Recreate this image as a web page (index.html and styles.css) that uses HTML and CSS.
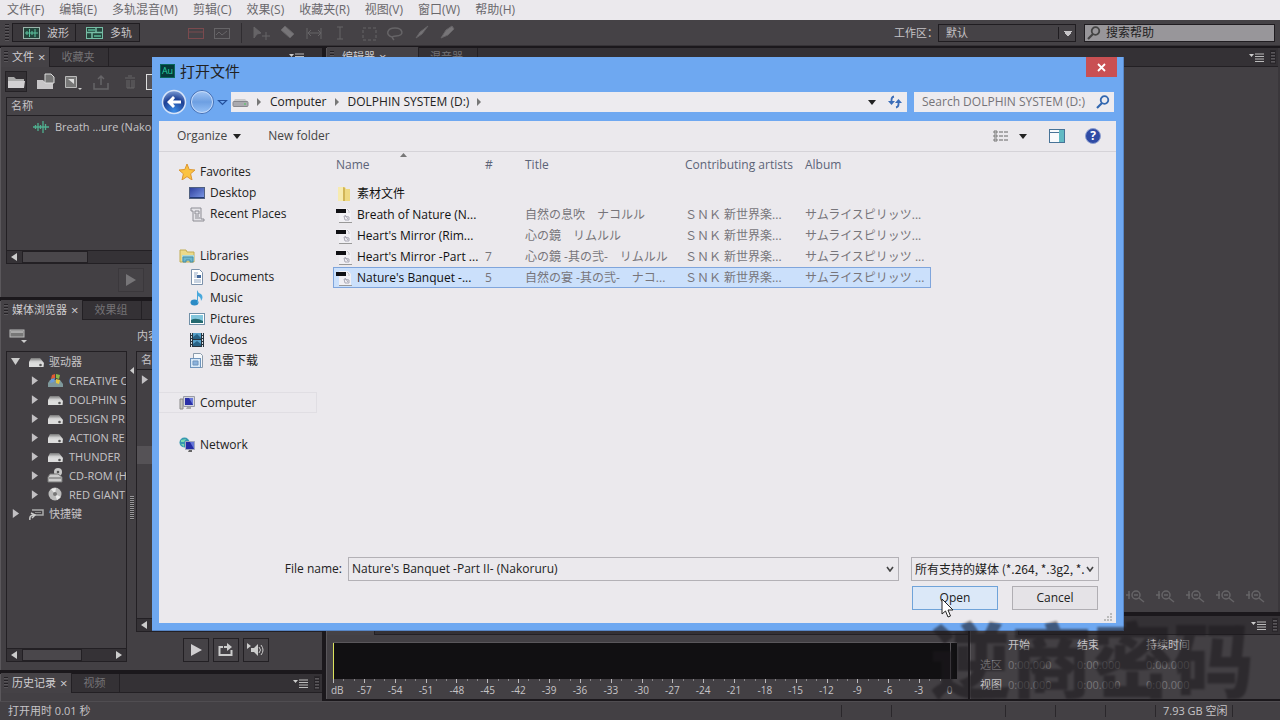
FILE: index.html
```html
<!DOCTYPE html>
<html lang="zh-CN">
<head>
<meta charset="utf-8">
<title>打开文件</title>
<link rel="stylesheet" href="styles.css">
</head>
<body>
<svg class="defs" aria-hidden="true">
  <linearGradient id="steel" x1="0" y1="0" x2="0" y2="1"><stop offset="0" stop-color="#777"/><stop offset=".45" stop-color="#ddd"/><stop offset="1" stop-color="#999"/></linearGradient>
  <linearGradient id="screen" x1="0" y1="0" x2="1" y2="1"><stop offset="0" stop-color="#2c3d9c"/><stop offset="1" stop-color="#7f9ce8"/></linearGradient>
  <symbol id="drive" viewBox="0 0 16 12"><path d="M3 2h9l4 5v4H1V6z" fill="url(#steel)"/><path d="M1 7h14v4H1z" fill="#ddd"/><circle cx="12.500" cy="9" r="1.300" fill="#555"/></symbol>
  <symbol id="tri" viewBox="0 0 8 10"><path d="M1 0l7 5-7 5z" fill="#c2c0c3"/></symbol>
  <symbol id="pmenu" viewBox="0 0 15 9"><path d="M0 1h5L2.500 4z" fill="#ccc"/><path d="M6 1h9M6 3.500h9M6 6h9M6 8.500h9" stroke="#bbb"/></symbol>
  <symbol id="wave" viewBox="0 0 16 12"><path d="M0 6h16M2.500 4v4M5 2v8M7.500 4v4M10 0v12M12.500 3v6" stroke="#4fb090" fill="none" stroke-width="1.300"/></symbol>
  <symbol id="audio" viewBox="0 0 16 16"><path d="M3 1h9l3 3v11H3z" fill="#f1f0f4"/><path d="M0 2h10v4H0z" fill="#101014"/><path d="M11 2l2 2v2" stroke="#c4c3ca" fill="none"/><path d="M8 9l5 1v3H9zM9 8l3 4" stroke="#aaa9b5" fill="none"/><path d="M3 15.500h13" stroke="#999"/></symbol>
  <symbol id="lens" viewBox="0 0 14 14"><circle cx="8.500" cy="5" r="3.800" fill="none" stroke="currentColor" stroke-width="1.800"/><path d="M6 8l-5 5" stroke="currentColor" stroke-width="2.200"/></symbol>
  <symbol id="zoomer" viewBox="0 0 22 16"><circle cx="11" cy="7" r="4" fill="none" stroke="#666467" stroke-width="1.500"/><path d="M14 10l5 4M4 3v8M1 7h4M9 7h4" stroke="#666467" stroke-width="1.500"/></symbol>
</svg>

<nav class="menubar">
  <button>文件(F)</button><button>编辑(E)</button><button>多轨混音(M)</button><button>剪辑(C)</button><button>效果(S)</button><button>收藏夹(R)</button><button>视图(V)</button><button>窗口(W)</button><button>帮助(H)</button>
</nav>

<header class="toolbar">
  <span class="grip"></span>
  <button class="mode"><svg width="17" height="12"><rect x=".5" y=".5" width="16" height="11" fill="#24463c" stroke="#9ab5ab"/><path d="M2 6h13M4 4v4M6.500 2v8M9 4v4M12 2v8" stroke="#5cc4a0"/></svg>波形</button>
  <button class="mode"><svg width="17" height="12"><rect x=".5" y=".5" width="16" height="11" fill="#24463c" stroke="#76bda5"/><path d="M1 5.500h15M10 1v4M6 6v5" stroke="#76bda5" stroke-width="1.500"/><path d="M2 2h7v2H2zM8 8h7v2H8z" fill="#4c9b80"/></svg>多轨</button>
  <svg class="tools" width="290" height="24" fill="none" stroke="#666467">
    <rect x="48.500" y="7.500" width="15" height="10" stroke="#7b4a4e"/><path d="M48 11h16" stroke="#7b4a4e"/><rect x="74.500" y="7.500" width="15" height="10"/><path d="M76 14l3-3 3 3 5-4"/>
    <path d="M101.500 2v20" stroke="#302d31"/><path d="M114 6l7 6-4 1-3 4z" fill="#666467"/><path d="M122 15h8M126 11v8"/><path d="M141 9l4-4 9 8-4 4z" fill="#777578"/><path d="M167 7v11M181 7v11M168 12h12M171 9l-3 3 3 3M178 9l3 3-3 3"/><path d="M197 6h6M200 6v12M197 18h6"/><rect x="223" y="7" width="13" height="12" stroke-dasharray="3 2"/><path d="M252 16c-7-2-5-9 3-9s10 8 1 8c-5 0-4 2-2 4" stroke-width="1.500"/><path d="M276 17l6-4 6-8-8 6z" fill="#777578"/><path d="M301 17l5-8 6-4 2 3-6 6z" fill="#777578"/>
  </svg>
  <div class="workspace-pick"><label for="ws">工作区：</label><select id="ws" class="dark-select"><option>默认</option></select></div>
  <label class="help-search"><svg width="14" height="14" color="#444"><use href="#lens"/></svg><input type="text" value="搜索帮助" aria-label="搜索帮助"></label>
</header>

<main class="work">
  <div class="left">
    <section class="panel files">
      <div class="tabs"><button class="tab on"><i class="grip"></i>文件<b>×</b></button><button class="tab wide">收藏夹</button><svg class="pm far" width="15" height="9"><use href="#pmenu"/></svg></div>
      <div class="file-tools">
        <svg width="136" height="24"><rect x=".5" y="1.500" width="21" height="20" fill="#343135" stroke="#252226"/><path d="M3 7h6l2 2h8v9H3z" fill="#aaa"/><path d="M3 11h17l-1 7H3z" fill="#d2d0d2"/><path d="M32 10h6l2 2h8v7H32z" fill="#c8c6c8"/><path d="M40 4h6l3 3v6h-9z" fill="#777" stroke="#ddd"/><path d="M60.500 6.500h11v11h-11z" fill="#777" stroke="#bbb"/><path d="M63 9h6v5z" fill="#ddd"/><path d="M73 18h4l-2 2z" fill="#ccc"/><path d="M89 13v6h14v-6M96 15V6M93 9l3-3 3 3" stroke="#666467" fill="none" stroke-width="1.500"/><path d="M120 8h10M122 10v8h7v-8M124 10v8M127 10v8M123 6h4" stroke="#666467" fill="none"/></svg>
        <input type="text" aria-label="筛选" class="filter">
      </div>
      <div class="file-box">
        <div class="col-head">名称</div>
        <div class="clip"><svg width="16" height="12"><use href="#wave"/></svg>Breath ...ure (Nakoru</div>
        <div class="hscroll"><svg width="6" height="8"><path d="M6 0v8L0 4z" fill="#ccc"/></svg><span class="thumb"></span></div>
      </div>
      <div class="play-row"><button class="sq dim" aria-label="播放"><svg width="10" height="12"><path d="M0 0l10 6-10 6z" fill="#777578"/></svg></button></div>
    </section>

    <section class="panel media">
      <div class="tabs"><button class="tab on"><i class="grip"></i>媒体浏览器<b>×</b></button><button class="tab wide">效果组</button></div>
      <div class="media-bar"><svg width="18" height="14"><rect x="1" y="1" width="14" height="7" fill="#777" stroke="#bbb"/><path d="M2 3h12" stroke="#ddd"/><path d="M12 11h6l-3 3z" fill="#ccc"/></svg><span>内容</span></div>
      <div class="media-main">
        <div class="tree">
          <ul>
            <li class="root"><svg width="9" height="7"><path d="M0 0h9L4.500 7z" fill="#ccc"/></svg><svg width="16" height="12"><use href="#drive"/></svg><span>驱动器</span></li>
            <li><svg width="7" height="9"><use href="#tri"/></svg><svg width="16" height="15"><path d="M3 7h10l3 4v3H1v-4z" fill="#7e989b"/><path d="M5 2l3-1v4l-4 1z" fill="#e45b32"/><path d="M9 1l4 1-1 4-3-1z" fill="#8ab848"/><path d="M4 6l4-1-1 4-4 1z" fill="#6a9bd8"/><path d="M9 6l4 1-1 4-3-1z" fill="#e9c83d"/></svg><span>CREATIVE C</span></li>
            <li><svg width="7" height="9"><use href="#tri"/></svg><svg width="16" height="12"><use href="#drive"/></svg><span>DOLPHIN S</span></li>
            <li><svg width="7" height="9"><use href="#tri"/></svg><svg width="16" height="12"><use href="#drive"/></svg><span>DESIGN PR</span></li>
            <li><svg width="7" height="9"><use href="#tri"/></svg><svg width="16" height="12"><use href="#drive"/></svg><span>ACTION RE</span></li>
            <li><svg width="7" height="9"><use href="#tri"/></svg><svg width="16" height="12"><use href="#drive"/></svg><span>THUNDER</span></li>
            <li><svg width="7" height="9"><use href="#tri"/></svg><svg width="16" height="15"><circle cx="11" cy="4" r="4" fill="#c9c9c9"/><circle cx="11" cy="4" r="1.300" fill="#555"/><path d="M1 9l2-3h8l4 3v5H1z" fill="#ccc" stroke="#777"/><path d="M2 10h12" stroke="#666"/></svg><span>CD-ROM (H</span></li>
            <li><svg width="7" height="9"><use href="#tri"/></svg><svg width="16" height="15"><circle cx="8" cy="7" r="6.500" fill="#bbb"/><path d="M8 7L4 2l5-1zM8 7l6 3-4 3z" fill="#e8e8e8"/><circle cx="8" cy="7" r="2" fill="#777"/></svg><span>RED GIANT</span></li>
            <li class="root"><svg width="9" height="9"><use href="#tri"/></svg><svg width="16" height="12"><path d="M4 2h11v5H6" fill="none" stroke="#aaa" stroke-width="1.500"/><path d="M7 4.500h6" stroke="#888"/><path d="M2 12q-1-5 4-5M3 5l4 2-3 3" fill="none" stroke="#ccc" stroke-width="1.500"/></svg><span>快捷键</span></li>
          </ul>
          <div class="hscroll"><svg width="6" height="8"><path d="M6 0v8L0 4z" fill="#ccc"/></svg><span class="thumb"></span><svg class="end" width="6" height="8"><path d="M0 0v8l6-4z" fill="#ccc"/></svg></div>
        </div>
        <div class="splitter"><svg width="4" height="7"><path d="M4 0v7L0 3.500z" fill="#ccc"/></svg><i></i></div>
        <div class="media-right">
          <div class="media-list"><div class="col-head">名</div><svg class="mt" width="7" height="9"><use href="#tri"/></svg><div class="band"></div><div class="hscroll"><svg width="6" height="8"><path d="M6 0v8L0 4z" fill="#ccc"/></svg></div></div>
          <div class="transport">
            <button class="sq" aria-label="播放"><svg width="11" height="12"><path d="M0 0l11 6-11 6z" fill="#d0ced0"/></svg></button>
            <button class="sq" aria-label="循环"><svg width="16" height="14"><path d="M5 4H1.500v8h12V7M6 4h6" fill="none" stroke="#ccc" stroke-width="2"/><path d="M9 0l5 4-5 4z" fill="#ccc"/></svg></button>
            <button class="sq" aria-label="自动播放"><svg width="18" height="14"><path d="M0 0l4 3-4 3zM4 5h3l4-4v12L7 9H4z" fill="#ccc"/><path d="M12 4q3 3 0 6M14 2q4 5 0 10" fill="none" stroke="#ccc"/></svg></button>
          </div>
        </div>
      </div>
    </section>

    <section class="panel history">
      <div class="tabs"><button class="tab on"><i class="grip"></i>历史记录<b>×</b></button><button class="tab wide">视频</button><svg class="pm" width="15" height="9"><use href="#pmenu"/></svg><i class="edge grip"></i></div>
    </section>
  </div>

  <div class="right">
    <section class="panel editor">
      <div class="tabs"><button class="tab on ed"><i class="grip"></i>编辑器<b>×</b></button><button class="tab wide">混音器</button><svg class="pm" width="15" height="9"><use href="#pmenu"/></svg><i class="edge grip"></i></div>
      <div class="zooms"><svg width="22" height="16"><use href="#zoomer"/></svg><svg width="22" height="16"><use href="#zoomer"/></svg><svg width="22" height="16"><use href="#zoomer"/></svg><svg width="22" height="16"><use href="#zoomer"/></svg><svg width="22" height="16"><use href="#zoomer"/></svg></div>
    </section>
    <div class="bottom">
      <section class="panel levels">
        <div class="tabs"><div class="tab on lvl"></div></div>
        <div class="meter"></div>
        <div class="ticks"></div>
        <div class="scale"><span class="db">dB</span><ol><li>-57</li><li>-54</li><li>-51</li><li>-48</li><li>-45</li><li>-42</li><li>-39</li><li>-36</li><li>-33</li><li>-30</li><li>-27</li><li>-24</li><li>-21</li><li>-18</li><li>-15</li><li>-12</li><li>-9</li><li>-6</li><li>-3</li><li>0</li></ol></div>
      </section>
      <section class="panel range">
        <div class="tabs"><div class="tab on lvl"></div><svg class="pm" width="15" height="9"><use href="#pmenu"/></svg><i class="edge grip"></i></div>
        <table><thead><tr><th></th><th>开始</th><th>结束</th><th>持续时间</th></tr></thead><tbody><tr><th>选区</th><td>0:00.000</td><td>0:00.000</td><td>0:00.000</td></tr><tr><th>视图</th><td>0:00.000</td><td>0:00.000</td><td>0:00.000</td></tr></tbody></table>
      </section>
    </div>
  </div>
</main>

<footer class="status"><span class="msg">打开用时 0.01 秒</span><span class="s1"></span><span class="s2"></span><span class="s1"></span><span class="s1"></span><span class="s1"></span><span class="free">7.93 GB 空闲</span><span class="s3"></span></footer>

<div class="dialog" role="dialog" aria-labelledby="dt">
  <div class="title"><span class="au">Au</span><h1 id="dt">打开文件</h1><button class="close" aria-label="Close"><svg width="9" height="9"><path d="M1 1l7 7M8 1L1 8" stroke="#fff" stroke-width="1.800"/></svg></button></div>
  <div class="navrow">
    <svg class="backfwd" width="68" height="26">
      <defs><radialGradient id="bk" cx=".5" cy=".9" r=".9"><stop offset="0" stop-color="#3d8ee8"/><stop offset=".6" stop-color="#1d3f94"/><stop offset="1" stop-color="#7f9fd8"/></radialGradient><linearGradient id="fw" x1="0" y1="0" x2="0" y2="1"><stop offset="0" stop-color="#a6c8f5"/><stop offset=".5" stop-color="#6d9fe2"/><stop offset="1" stop-color="#98c3f8"/></linearGradient></defs>
      <circle cx="13" cy="13" r="11.500" fill="url(#bk)" stroke="#d5e3f8" stroke-width="1.500"/><path d="M6 13l6-6 2 2-2 2.500h8v3h-8l2 2.500-2 2z" fill="#fff"/><circle cx="41" cy="13" r="11.500" fill="url(#fw)" stroke="#456fb3"/><circle cx="41" cy="13" r="10.500" fill="none" stroke="#c4dafa"/><path d="M57.500 11.500h8l-4 4z" fill="none" stroke="#24509c" stroke-width="1.200"/>
    </svg>
    <div class="address"><svg width="17" height="12"><path d="M3 3h10l3 3H1z" fill="#c9c9cc"/><rect x="1" y="5.500" width="15" height="5" rx="1" fill="#aaaab0" stroke="#88888e"/><path d="M12 8h2" stroke="#4c5"/></svg><i class="arr"></i><button>Computer</button><i class="arr"></i><button>DOLPHIN SYSTEM (D:)</button><i class="arr"></i><i class="down"></i><button class="refresh" aria-label="Refresh"><svg width="14" height="14"><path d="M6 1.500Q3.500 2 3.500 5v3M8 12.500q2.500-.5 2.500-3.500V6" fill="none" stroke="#3a6cb8" stroke-width="1.800"/><path d="M0 6h7L3.500 10zM7 8h7l-3.500-4z" fill="#3a6cb8"/></svg></button></div>
    <label class="search"><input type="text" placeholder="Search DOLPHIN SYSTEM (D:)" aria-label="Search"><svg width="14" height="14" color="#3267b0"><use href="#lens"/></svg></label>
  </div>
  <div class="client">
    <div class="cmdbar"><button>Organize <i class="down"></i></button><button>New folder</button>
      <button class="view" aria-label="View"><svg width="16" height="12"><path d="M1 1h3v2H1zM1 5h3v2H1zM1 9h3v2H1z" fill="#ddd" stroke="#777"/><path d="M6 2h4M11 2h4M6 6h4M11 6h4M6 10h4M11 10h4" stroke="#666"/></svg><i class="down"></i></button>
      <button class="pane" aria-label="Preview pane"><svg width="16" height="14"><rect x=".5" y=".5" width="15" height="13" fill="#f8fafc" stroke="#477397"/><path d="M1 3.500h9" stroke="#477397"/><path d="M10 1h5v12h-5z" fill="#62bac4"/></svg></button>
      <button class="help" aria-label="Help">?</button></div>
    <div class="browse">
      <ul class="places">
        <li><svg width="16" height="16"><path d="M8 0l2.200 5.500 5.800.5-4.400 3.800L13 16l-5-3.400L3 16l1.400-6.200L0 6l5.800-.5z" fill="#fbc340" stroke="#dc9530"/></svg><a href="#">Favorites</a></li>
        <li class="sub"><svg width="16" height="16"><rect x=".5" y="2.500" width="15" height="11" fill="url(#screen)" stroke="#506080"/><path d="M1 12.500h14" stroke="#233a77"/></svg><a href="#">Desktop</a></li>
        <li class="sub"><svg width="16" height="16"><path d="M2 2h10v11h3v2H4V5H2z" fill="#e5e4e8" stroke="#8d8d94"/><path d="M6 5h4v3H6zM6 10h4M6 12h5" fill="none" stroke="#8d8d94"/></svg><a href="#">Recent Places</a></li>
        <li class="gap"><svg width="16" height="16"><path d="M1 2h6l1 2h7v10H1z" fill="#ead98a" stroke="#c1ac55"/><path d="M3 7h12v6H3z" fill="#a9d8dd"/><path d="M4 14V9h10v5h-3v-2H7v2z" fill="#6db7cd" stroke="#478da5"/></svg><a href="#">Libraries</a></li>
        <li class="sub"><svg width="16" height="16"><path d="M2.500.5h8l3 3v12h-11z" fill="#fff" stroke="#7b91ab"/><path d="M5 4h4M5 6h3M5 8h3M5 11h7M5 13h7" stroke="#91a7c4"/><path d="M8 6h4v3H8z" fill="#43699c"/></svg><a href="#">Documents</a></li>
        <li class="sub"><svg width="16" height="16"><ellipse cx="5.500" cy="12.500" rx="4" ry="3" fill="#2b8bc5"/><path d="M8 13V0q1 3 4 4 3 3 0 7 0-4-3-5v7z" fill="#48a8dc"/></svg><a href="#">Music</a></li>
        <li class="sub"><svg width="16" height="16"><rect x=".5" y="2.500" width="15" height="11" fill="#fff" stroke="#7090a8"/><path d="M2 4h12v8H2z" fill="#82c6dc"/><path d="M2 9q5-3 12 1v2H2z" fill="#246a70"/></svg><a href="#">Pictures</a></li>
        <li class="sub"><svg width="16" height="16"><path d="M1 1h14v14H1z" fill="#27343e"/><path d="M4 1h8v6H4zM4 8h8v6H4z" fill="#57a0c8"/><path d="M4 5l4-3 4 4v1H4zM4 12l4-3 4 3v2H4z" fill="#286386"/><path d="M2.500 1v14M13.500 1v14" stroke="#dce2e6" stroke-dasharray="2 1"/></svg><a href="#">Videos</a></li>
        <li class="sub"><svg width="16" height="16"><path d="M4.500.5h7l2 2v12h-9z" fill="#f5f8fb" stroke="#8b9bab"/><rect x="1.500" y="5.500" width="10" height="9" fill="#d7e8f7" stroke="#6e94bd"/><path d="M4 8h5v4H4z" fill="#8bb2dc" stroke="#6e94bd"/></svg><a href="#">迅雷下载</a></li>
        <li class="gap hot"><svg width="16" height="16"><path d="M1 4h3v10H1z" fill="#c8c8bf" stroke="#888"/><path d="M4.500 1.500h11v10h-11z" fill="#d3d5df" stroke="#999ba5"/><path d="M6 3h8v7H6z" fill="#292fa6"/><path d="M10 3h4v7z" fill="#6877db"/><path d="M8 12h4v2H7z" fill="#aaa"/></svg><a href="#">Computer</a></li>
        <li class="gap"><svg width="16" height="16"><circle cx="5.500" cy="5.500" r="5" fill="#3799b0"/><path d="M2 3l5-1-2 3H2zM2 7h3v3z" fill="#7cdab0"/><path d="M6.500 4.500h9v8h-9z" fill="#252ca4" stroke="#a4a9bd"/><path d="M11 5h4v7z" fill="#6576d8"/><path d="M10 13h3v2h-4z" fill="#666"/></svg><a href="#">Network</a></li>
      </ul>
      <div class="listing">
        <table class="list">
          <colgroup><col class="c1"><col class="c2"><col class="c3"><col class="c4"><col class="c5"></colgroup>
          <thead><tr><th><svg class="sort" width="7" height="4"><path d="M0 4l3.500-4L7 4z" fill="#777"/></svg>Name</th><th>#</th><th>Title</th><th>Contributing artists</th><th>Album</th></tr></thead>
          <tbody>
            <tr><td><div><svg width="16" height="16"><path d="M2 1h7l1 2h4v12H2z" fill="#eed982"/><path d="M2 1h5v14H2z" fill="#f7ebb0"/><path d="M7 1l2 1v13H7z" fill="#d1b557"/></svg>素材文件</div></td><td></td><td></td><td></td><td></td></tr>
            <tr><td><div><svg width="16" height="16"><use href="#audio"/></svg>Breath of Nature (N...</div></td><td></td><td lang="ja">自然の息吹　ナコルル</td><td lang="ja">ＳＮＫ 新世界楽...</td><td lang="ja">サムライスピリッツ...</td></tr>
            <tr><td><div><svg width="16" height="16"><use href="#audio"/></svg>Heart's Mirror (Rim...</div></td><td></td><td lang="ja">心の鏡　リムルル</td><td lang="ja">ＳＮＫ 新世界楽...</td><td lang="ja">サムライスピリッツ...</td></tr>
            <tr><td><div><svg width="16" height="16"><use href="#audio"/></svg>Heart's Mirror -Part ...</div></td><td>7</td><td lang="ja">心の鏡 -其の弐-　リムルル</td><td lang="ja">ＳＮＫ 新世界楽...</td><td lang="ja">サムライスピリッツ ...</td></tr>
            <tr class="sel"><td><div><svg width="16" height="16"><use href="#audio"/></svg>Nature's Banquet -...</div></td><td>5</td><td lang="ja">自然の宴 -其の弐-　ナコ...</td><td lang="ja">ＳＮＫ 新世界楽...</td><td lang="ja">サムライスピリッツ ...</td></tr>
          </tbody>
        </table>
      </div>
    </div>
    <div class="choose">
      <div class="line"><label for="fn">File name:</label><div class="combo"><input id="fn" type="text" value="Nature's Banquet -Part II- (Nakoruru)"><svg width="8" height="6"><path d="M1 1l3 4 3-4" fill="none" stroke="#444" stroke-width="1.600"/></svg></div><div class="combo type"><select aria-label="文件类型"><option>所有支持的媒体 (*.264, *.3g2, *.</option></select><svg width="8" height="6"><path d="M1 1l3 4 3-4" fill="none" stroke="#444" stroke-width="1.600"/></svg></div></div>
      <div class="line acts"><button class="push primary">Open</button><button class="push">Cancel</button></div>
    </div>
    <svg class="size" width="9" height="9" fill="#bbb"><path d="M6 0h2v2H6zM3 3h2v2H3zM6 3h2v2H6zM0 6h2v2H0zM3 6h2v2H3zM6 6h2v2H6z"/></svg>
  </div>
</div>

<div class="watermark">逆商密码</div>
<svg class="pointer" width="14" height="20"><path d="M1 1v15l3.500-3 2.500 6 2.500-1L7 12h5z" fill="#fff" stroke="#222"/></svg>
</body>
</html>
```
FILE: styles.css
```css
* { box-sizing: border-box; }
body {
  margin: 0;
  height: 100vh;
  display: flex;
  flex-direction: column;
  overflow: hidden;
  position: relative;
  background: #1b181c;
  color: #c6c4c7;
  font: 11px/16px "Open Sans", "Noto Sans CJK SC", sans-serif;
}
button, input, select { font: inherit; color: inherit; border: 0; background: none; padding: 0; margin: 0; border-radius: 0; }
input, select { min-width: 0; outline: 0; appearance: none; }
ul, ol { list-style: none; margin: 0; padding: 0; }
svg { flex: none; display: block; }
a { color: inherit; text-decoration: none; }
.defs { position: absolute; width: 0; height: 0; }

.menubar { display: flex; gap: 15px; height: 20px; padding: 0 7px; background: #ebe9ed; color: #6a686c; font-size: 12px; flex: none; }
.menubar button { white-space: nowrap; }

.toolbar { display: flex; align-items: center; height: 26px; flex: none; background: #454246; padding: 0 5px; border-bottom: 1px solid #353236; }
.grip { flex: none; width: 4px; height: 12px; background: repeating-linear-gradient(#242125 0 1px, #5a575b 1px 2px, #454246 2px 3px); }
.toolbar > .grip { margin-right: 3px; height: 18px; }
.mode { display: flex; align-items: center; gap: 7px; width: 64px; height: 19px; padding-left: 10px; border: 1px solid #201d21; background: #3b383c; }
.mode + .mode { border-left: 0; }
.tools { width: 330px; }
.workspace-pick { display: flex; align-items: center; margin-left: auto; }
.dark-select { width: 138px; height: 18px; padding-left: 7px; border: 1px solid #201d21; background: conic-gradient(from -37deg at 50% 100%, #c6c4c7 74deg, transparent 0) 125px 6px / 8px 6px no-repeat, linear-gradient(#201d21, #201d21) 119px 2px / 1px 12px no-repeat, #454246; }
.help-search { display: flex; align-items: center; gap: 5px; width: 191px; height: 18px; margin-left: 8px; padding-left: 2px; border: 1px solid #201d21; background: #98969a; color: #222; font-size: 12px; }
.help-search input { width: 100%; }

.work { flex: 1; min-height: 0; display: flex; gap: 4px; padding-top: 2px; }
.left { width: 322px; flex: none; display: flex; flex-direction: column; gap: 4px; }
.right { flex: 1; min-width: 0; display: flex; flex-direction: column; gap: 4px; }
.panel { background: #434044; border-left: 1px solid #5a575b; min-width: 0; }
.tabs { display: flex; height: 19px; background: #343135; border-bottom: 1px solid #232024; align-items: center; }
.tab { display: flex; align-items: center; height: 19px; padding: 0 4px 0 3px; gap: 4px; color: #757376; white-space: nowrap; }
.tab.on { background: #454246; color: #d0ced1; height: 20px; border-right: 1px solid #232024; }
.tab b { font-weight: 400; font-size: 13px; }
.tab.wide { padding: 0 14px 0 11px; border-right: 1px solid #232024; }
.pm { margin-left: auto; margin-right: 7px; }
.pm.far { margin-right: 18px; }
.pm + .edge { margin-right: 3px; outline: 1px solid #2a272b; }

.files { flex: none; display: flex; flex-direction: column; height: 249px; }
.file-tools { display: flex; align-items: center; gap: 5px; height: 30px; padding-left: 4px; }
.filter { flex: 1; height: 16px; border: 1px solid #ddd; background: #555256; }
.file-box { flex: 1; display: flex; flex-direction: column; margin: 0 0 0 5px; border: 1px solid #232024; }
.col-head { height: 18px; padding-left: 4px; border-bottom: 1px solid #232024; background: #464347; }
.clip { display: flex; align-items: center; gap: 6px; height: 21px; padding-left: 26px; white-space: nowrap; }
.hscroll { display: flex; align-items: center; height: 13px; margin-top: auto; padding: 0 4px; background: #353236; border-top: 1px solid #232024; flex: none; }
.thumb { width: 66px; height: 12px; margin-left: 5px; background: #4a474b; border: 1px solid #232024; }
.tree .thumb { width: 60px; }
.end { margin-left: auto; }
.play-row { height: 33px; padding: 4px 0 0 117px; }
.sq { display: flex; align-items: center; justify-content: center; width: 26px; height: 24px; border: 1px solid #232024; background: #454246; }
.sq.dim { border-color: #3b383c; }

.media { flex: 1; display: flex; flex-direction: column; min-height: 0; }
.media-bar { display: flex; align-items: center; height: 31px; padding-left: 8px; gap: 110px; }
.media-main { flex: 1; display: flex; min-height: 0; padding-left: 5px; }
.tree { width: 121px; display: flex; flex-direction: column; margin-bottom: 8px; border: 1px solid #232024; overflow: hidden; }
.tree li { display: flex; align-items: center; gap: 9px; height: 19px; padding-left: 24px; white-space: nowrap; }
.tree li svg + span { margin-left: -3px; }
.tree .root { padding-left: 4px; gap: 8px; }
.splitter { display: flex; flex-direction: column; width: 9px; padding: 16px 0 0 3px; gap: 122px; }
.splitter i { width: 4px; height: 24px; background: repeating-linear-gradient(#98969a 0 1px, #333 1px 2px); }
.media-right { flex: 1; display: flex; flex-direction: column; }
.media-list { flex: 1; display: flex; flex-direction: column; border: 1px solid #232024; }
.mt { margin: 5px 5px 0 4px; }
.band { height: 18px; margin-top: 62px; background: #555256; }
.transport { display: flex; gap: 4px; padding: 6px 0 8px 47px; }
.history { height: 27px; flex: none; }

.editor { flex: 1; display: flex; flex-direction: column; justify-content: space-between; border-right: 2px solid #3a373b; }
.ed { width: 92px; }
.ed .grip { margin-right: 4px; }
.zooms { display: flex; justify-content: flex-end; gap: 8px; padding: 0 11px 8px; }
.bottom { height: 83px; display: flex; gap: 2px; margin-bottom: 2px; }
.levels { flex: 1; padding-right: 3px; }
.levels .tabs { margin-right: -3px; }
.lvl { width: 48px; }
.meter { height: 36px; margin: 8px 8px 0 6px; border-left: 1px solid #dce35c; background: linear-gradient(#555256, #555256) right 6px top / 1px 100% no-repeat, #111012; box-shadow: 0 -1px #5a575b; }
.ticks { height: 4px; margin: 0 15px 0 6px; background: repeating-linear-gradient(90deg, #bbb9bc 0 1px, transparent 1px 5%), repeating-linear-gradient(90deg, #858386 0 1px, transparent 1px 1.6667%) top / 100% 2px no-repeat; }
.scale { display: flex; height: 16px; font-size: 10px; line-height: 14px; }
.db { width: 22px; padding-left: 4px; }
.scale ol { flex: 1; display: grid; grid-template-columns: repeat(20, 1fr); text-align: center; }
.range { width: 310px; }
.range table { border-collapse: collapse; margin: 0 0 0 9px; line-height: 20px; }
.range th, .range td { padding: 0; font-weight: 400; text-align: left; width: 69px; }
.range th:first-child { width: 28px; }
.range td { color: #777578; }

.status { display: flex; height: 19px; flex: none; align-items: center; background: #434044; border-top: 1px solid #504d51; padding: 0 8px; }
.msg { flex: 1; }
.status span + span { border-left: 1px solid #2a272b; height: 12px; }
.s1 { width: 50px; }
.s2 { width: 114px; }
.s3 { width: 40px; }
.status .free { width: 77px; padding-left: 7px; line-height: 12px; }

.dialog { position: absolute; left: 152px; right: 156px; top: 57px; bottom: 89px; display: flex; flex-direction: column; padding: 0 7px 7px; background: #6ea8f1; border: 1px solid #5786c6; border-width: 0 1px 1px 0; color: #222; font-size: 12px; }
.title { display: flex; align-items: center; gap: 5px; height: 29px; padding-bottom: 2px; }
.au { width: 15px; height: 14px; margin-left: 1px; border: 1px solid #07685c; background: #053a39; color: #2bd0a4; font-size: 9px; line-height: 12px; text-align: center; }
.title h1 { margin: 0; font-size: 15px; font-weight: 400; line-height: 20px; }
.close { display: flex; align-items: center; justify-content: center; width: 31px; height: 20px; margin: 0 -1px 7px auto; background: #c95053; }
.navrow { display: flex; align-items: center; height: 35px; padding: 0 2px 3px 2px; }
.address { flex: 1; display: flex; align-items: center; height: 20px; margin-left: 2px; padding: 0 5px 0 1px; background: #edebef; }
.arr { width: 0; height: 0; margin: 0 9px 0 8px; border: 4px solid transparent; border-left-color: #777; border-right: 0; }
.down { display: inline-block; width: 0; height: 0; margin-left: 3px; border: 4px solid transparent; border-top: 5px solid #222; border-bottom: 0; vertical-align: middle; }
.address .down { margin-left: auto; }
.refresh { margin-left: 12px; }
.search { display: flex; align-items: center; width: 200px; height: 20px; margin-left: 7px; padding: 0 4px 0 8px; background: #edebef; }
.search input { flex: 1; }
.search input::placeholder { color: #757378; opacity: 1; }
.client { position: relative; flex: 1; min-height: 0; display: flex; flex-direction: column; background: #ebe9ed; }
.cmdbar { display: flex; align-items: center; height: 31px; padding: 0 15px 0 18px; border-bottom: 1px solid #d5d3d8; color: #444; flex: none; }
.cmdbar button + button { margin-left: 27px; }
.cmdbar button + .view { display: flex; align-items: center; gap: 7px; margin-left: auto; }
.cmdbar button + .pane { margin-left: 22px; }
.cmdbar button + .help { width: 16px; height: 16px; margin-left: 20px; border-radius: 8px; background: #2f4ba5; border: 1px solid #8d9fd0; color: #fff; font-weight: 700; line-height: 14px; }
.browse { flex: 1; display: flex; min-height: 0; }
.places { width: 158px; padding-top: 9px; }
.places li { display: flex; align-items: center; gap: 5px; height: 21px; padding-left: 20px; }
.places .sub { padding-left: 30px; }
.places .gap { margin-top: 21px; }
.hot { border: 1px solid #e0dee3; border-left: 0; }
.listing { flex: 1; margin-left: 16px; min-width: 0; }
.list { width: 598px; table-layout: fixed; border-collapse: collapse; }
.c1 { width: 148px; }
.c2 { width: 40px; }
.c3 { width: 160px; }
.c4 { width: 120px; }
.c5 { width: 130px; }
.list th { height: 31px; padding: 0 0 5px 4px; font-weight: 400; text-align: left; color: #5c6478; position: relative; }
.sort { position: absolute; left: 67px; top: 1px; }
.list td { height: 21px; padding: 0 0 0 4px; line-height: 19px; color: #77757a; white-space: nowrap; }
.list td[lang] { font-family: "Open Sans", "Noto Sans CJK JP", sans-serif; }
.list td:first-child, .list th:first-child { padding-left: 3px; }
.list td div { display: flex; align-items: center; gap: 5px; color: #111; }
.sel { background: #cbe0fb; outline: 1px solid #7fa5dc; outline-offset: -1px; }
.choose { padding: 0 17px 13px; flex: none; }
.line { display: flex; align-items: center; }
.line label { width: 172px; padding-right: 6px; text-align: right; }
.combo { flex: 1; display: flex; align-items: center; height: 24px; padding: 0 4px 0 3px; border: 1px solid #b3b1b6; }
.combo input, .combo select { flex: 1; }
.type { flex: none; width: 188px; margin-left: 12px; font-family: "Noto Sans CJK SC", sans-serif; }
.acts { justify-content: flex-end; gap: 14px; margin-top: 5px; padding-right: 1px; }
.push { width: 86px; height: 24px; border: 1px solid #b0aeb3; background: #e5e3e7; }
.primary { border-color: #6fa3d9; background: #dbe8f8; }
.size { position: absolute; right: 3px; bottom: 1px; }
.watermark { position: absolute; right: 26px; bottom: 24px; color: #1c191d; opacity: .55; font: 900 81px/80px "Noto Sans CJK SC", sans-serif; filter: blur(1px); pointer-events: none; white-space: nowrap; }
.pointer { position: absolute; left: 941px; top: 598px; }
```
